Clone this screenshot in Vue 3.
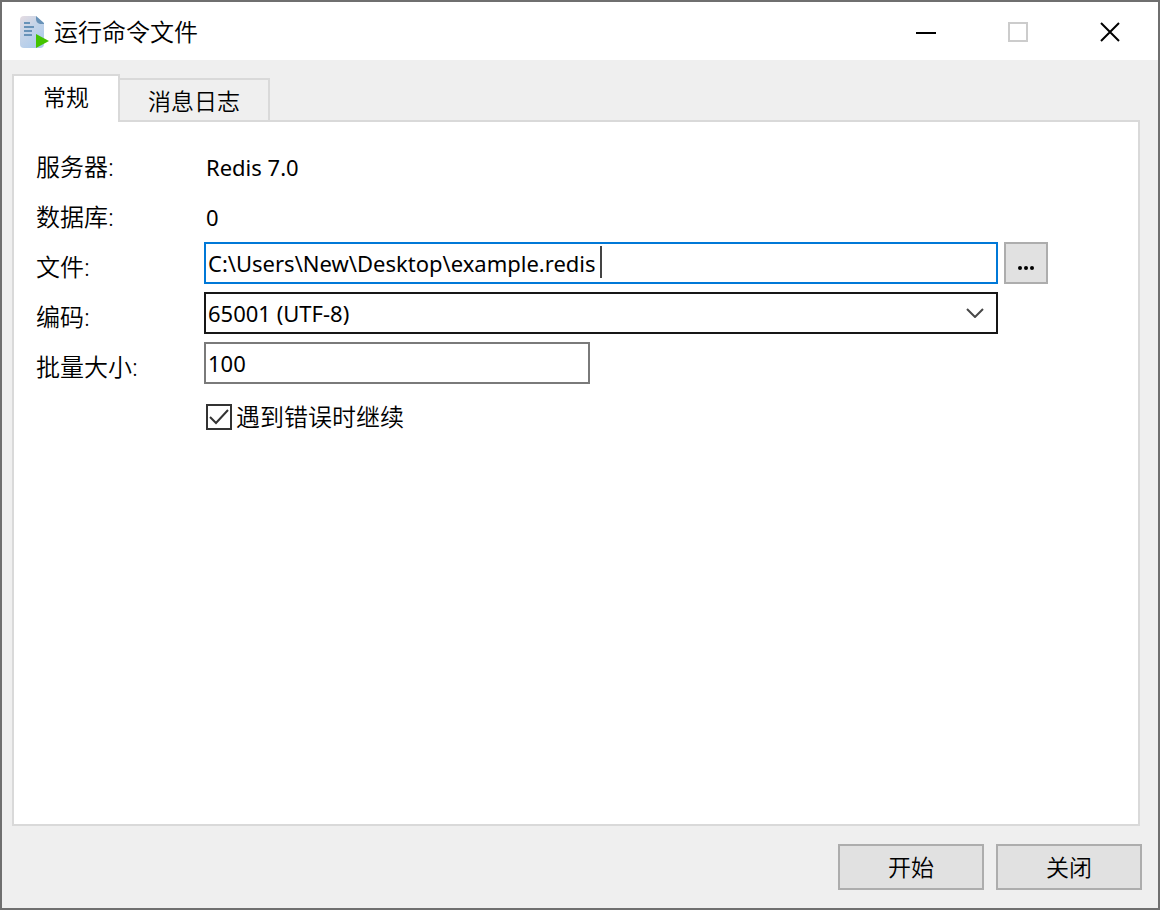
<script setup>
import { ref } from 'vue'

const tabs = ['常规', '消息日志']
const activeTab = ref(0)
const file = ref('C:\\Users\\New\\Desktop\\example.redis')
const encoding = ref('65001 (UTF-8)')
const batchSize = ref('100')
const continueOnError = ref(true)
</script>

<template>
  <div class="window">
    <header class="titlebar">
      <svg class="app-icon" width="30" height="34" viewBox="0 0 30 34" aria-hidden="true">
        <defs>
          <linearGradient id="page" x1="0" y1="0" x2="0.7" y2="1">
            <stop offset="0" stop-color="#e6dce2" />
            <stop offset="0.5" stop-color="#c3d3e8" />
            <stop offset="1" stop-color="#adcbec" />
          </linearGradient>
        </defs>
        <path d="M4 1H16L24 9V29Q24 33 20 33H4Q0 33 0 29V5Q0 1 4 1Z" fill="url(#page)" />
        <path d="M16 1L24 8V9H20Q16 8 16 4Z" fill="#6892b8" />
        <path d="M4 8H10M4 12H14M4 16H12M4 20H12" stroke="#6892b8" stroke-width="2" />
        <path d="M16 19L29 26L16 33Z" fill="#44c300" />
      </svg>
      <h1 class="title">运行命令文件</h1>
      <div class="controls">
        <button class="control" type="button" aria-label="最小化">
          <svg width="20" height="20" viewBox="0 0 20 20"><path d="M0 11H20" stroke="#000" stroke-width="2" /></svg>
        </button>
        <button class="control" type="button" aria-label="最大化" disabled>
          <svg width="20" height="20" viewBox="0 0 20 20"><rect x="1" y="1" width="18" height="18" fill="none" stroke="#ccc" stroke-width="2" /></svg>
        </button>
        <button class="control" type="button" aria-label="关闭窗口">
          <svg width="20" height="20" viewBox="0 0 20 20"><path d="M1 1L19 19M19 1L1 19" stroke="#000" stroke-width="2" /></svg>
        </button>
      </div>
    </header>

    <main class="body">
      <div class="tabs" role="tablist">
        <button
          v-for="(tab, i) in tabs"
          :key="tab"
          class="tab"
          :class="{ active: i === activeTab }"
          type="button"
          role="tab"
          :aria-selected="i === activeTab"
          @click="activeTab = i"
        >{{ tab }}</button>
      </div>

      <section class="panel">
        <form v-if="activeTab === 0" class="form" @submit.prevent>
          <span class="label">服务器:</span>
          <span class="value">Redis 7.0</span>

          <span class="label">数据库:</span>
          <span class="value">0</span>

          <label class="label" for="file">文件:</label>
          <div class="field-row">
            <div class="field">
              <input id="file" v-model="file" class="input focused" type="text" spellcheck="false" />
              <span class="caret"></span>
            </div>
            <button class="browse" type="button" aria-label="浏览">
              <svg width="16" height="4" viewBox="0 0 16 4"><circle cx="2" cy="2" r="2" /><circle cx="8" cy="2" r="2" /><circle cx="14" cy="2" r="2" /></svg>
            </button>
          </div>

          <label class="label" for="encoding">编码:</label>
          <div class="field-row">
            <div class="field">
              <select id="encoding" v-model="encoding" class="input select">
                <option>65001 (UTF-8)</option>
              </select>
              <svg class="chevron" width="18" height="10" viewBox="0 0 18 10"><path d="M1 1L9 9L17 1" fill="none" stroke="#484848" stroke-width="2" /></svg>
            </div>
          </div>

          <label class="label" for="batch">批量大小:</label>
          <input id="batch" v-model="batchSize" class="input batch" type="text" />

          <label class="check">
            <input v-model="continueOnError" class="check-input" type="checkbox" />
            <span class="box">
              <svg v-if="continueOnError" width="22" height="22" viewBox="0 0 22 22"><path d="M2 11L8 17L20 4" fill="none" stroke="#333" stroke-width="2" /></svg>
            </span>
            <span>遇到错误时继续</span>
          </label>
        </form>
      </section>
    </main>

    <footer class="footer">
      <button class="action" type="button">开始</button>
      <button class="action" type="button">关闭</button>
    </footer>
  </div>
</template>

<style>
body {
  margin: 0;
}
</style>

<style scoped>
.window {
  box-sizing: border-box;
  min-height: 100vh;
  display: flex;
  flex-direction: column;
  border: 2px solid #6f6f6f;
  background: #efefef;
  color: #000;
  font-family: "Noto Sans", "Noto Sans CJK SC", sans-serif;
  font-size: 24px;
  font-weight: 350;
  line-height: 32px;
}

button,
input,
select {
  box-sizing: border-box;
  margin: 0;
  padding: 0;
  border: 0;
  border-radius: 0;
  background: none;
  color: inherit;
  font: inherit;
}

svg {
  display: block;
}

.titlebar {
  box-sizing: border-box;
  display: flex;
  align-items: center;
  height: 58px;
  padding: 2px 0 0 18px;
  background: #fff;
}

.title {
  margin: 0 0 0 4px;
  font-size: 24px;
  font-weight: inherit;
}

.controls {
  display: flex;
  align-self: stretch;
  margin-left: auto;
  padding-right: 2px;
}

.control {
  display: flex;
  align-items: center;
  justify-content: center;
  width: 92px;
}

.body {
  flex: 1;
  display: flex;
  flex-direction: column;
  padding: 14px 18px 0 10px;
}

.tabs {
  position: relative;
  display: flex;
  align-items: flex-end;
  margin-bottom: -2px;
}

.tab {
  height: 44px;
  padding: 2px 28px 0;
  border: 2px solid #d9d9d9;
  border-left: 0;
  font-size: 23px;
}

.tab.active {
  height: 48px;
  padding: 0 29px 4px;
  border-left: 2px solid #d9d9d9;
  border-bottom: 0;
  background: #fff;
}

.panel {
  flex: 1;
  padding: 20px 90px 20px 22px;
  border: 2px solid #d9d9d9;
  background: #fff;
}

.form {
  display: grid;
  grid-template-columns: 168px 1fr;
  grid-auto-rows: 42px;
  row-gap: 8px;
}

.label,
.value {
  padding-top: 9px;
}

.value,
.input {
  font-size: 22px;
  font-weight: 400;
}

.value {
  padding-left: 2px;
}

.field-row {
  display: flex;
  gap: 6px;
}

.field {
  position: relative;
  flex: 1;
}

.field:only-child {
  margin-right: 50px;
}

.input {
  width: 100%;
  height: 42px;
  padding: 0 2px;
  border: 2px solid #7a7a7a;
  background: #fff;
  outline: none;
}

.input.focused {
  border-color: #0078d7;
}

.caret {
  position: absolute;
  top: 4px;
  left: 396px;
  width: 2px;
  height: 32px;
  background: #444;
}

.select {
  appearance: none;
  border-color: #171717;
}

.chevron {
  position: absolute;
  top: 16px;
  right: 14px;
  pointer-events: none;
}

.batch {
  width: 386px;
}

.browse {
  display: flex;
  align-items: center;
  justify-content: center;
  width: 44px;
  padding-top: 10px;
  border: 2px solid #adadad;
  background: #e1e1e1;
}

.check {
  grid-column: 2;
  justify-self: start;
  position: relative;
  display: flex;
  align-items: center;
  gap: 4px;
  padding: 9px 0 0 2px;
  height: 32px;
}

.check-input {
  position: absolute;
  width: 26px;
  height: 26px;
  opacity: 0;
}

.box {
  box-sizing: border-box;
  width: 26px;
  height: 26px;
  border: 2px solid #333;
  background: #fff;
}

.footer {
  display: flex;
  justify-content: flex-end;
  gap: 12px;
  padding: 18px 16px 18px 10px;
}

.action {
  width: 146px;
  height: 46px;
  border: 2px solid #adadad;
  background: #e1e1e1;
  font-size: 23px;
}
</style>
